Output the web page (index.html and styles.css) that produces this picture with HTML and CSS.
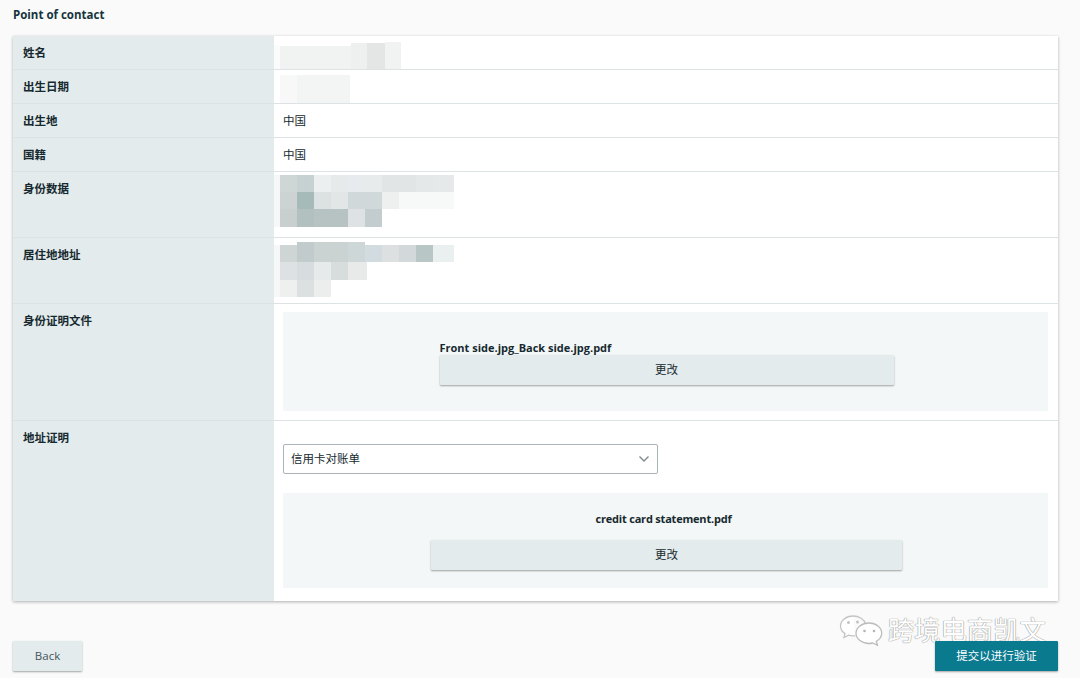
FILE: index.html

```html
<!DOCTYPE html>
<html lang="zh-CN">
<head>
  <meta charset="UTF-8">
  <title>Point of contact</title>
  <link rel="stylesheet" href="styles.css">
</head>
<body>
  <h1 class="page-title">Point of contact</h1>

  <div class="card">
    <div class="row row-short">
      <div class="label">姓名</div>
      <div class="value">
        <svg class="mosaic" width="140" height="33" viewBox="0 0 140 33">
          <rect x="-12" y="9" width="18" height="24" fill="#fafbfb"/>
          <rect x="6" y="10" width="71" height="23" fill="#f1f2f2"/>
          <rect x="77" y="7" width="16" height="26" fill="#eeefef"/>
          <rect x="93" y="7" width="18" height="26" fill="#e4e6e6"/>
          <rect x="111" y="6" width="16" height="27" fill="#f1f2f2"/>
        </svg>
      </div>
    </div>
    <div class="row row-short">
      <div class="label">出生日期</div>
      <div class="value">
        <svg class="mosaic" width="140" height="33" viewBox="0 0 140 33">
          <rect x="6" y="5" width="17" height="28" fill="#f8f8f8"/>
          <rect x="23" y="5" width="53" height="28" fill="#f3f4f4"/>
        </svg>
      </div>
    </div>
    <div class="row row-short">
      <div class="label">出生地</div>
      <div class="value">中国</div>
    </div>
    <div class="row row-short">
      <div class="label">国籍</div>
      <div class="value">中国</div>
    </div>
    <div class="row row-tall">
      <div class="label">身份数据</div>
      <div class="value">
        <svg class="mosaic" width="190" height="60" viewBox="0 0 190 60">
          <g transform="translate(6 3)">
            <rect x="-6" y="0" width="6" height="52" fill="#f6f8f8"/>
            <rect x="0" y="0" width="17" height="17" fill="#ced6d6"/>
            <rect x="17" y="0" width="17" height="17" fill="#c6d2d2"/>
            <rect x="34" y="0" width="17" height="17" fill="#eceff0"/>
            <rect x="51" y="0" width="17" height="17" fill="#e6eaea"/>
            <rect x="68" y="0" width="17" height="17" fill="#e8ebee"/>
            <rect x="85" y="0" width="17" height="17" fill="#e8ebeb"/>
            <rect x="102" y="0" width="34" height="17" fill="#e2e5e5"/>
            <rect x="136" y="0" width="17" height="17" fill="#e5e8e8"/>
            <rect x="153" y="0" width="21" height="17" fill="#e6e9e9"/>
            <rect x="0" y="17" width="17" height="17" fill="#cdd2d2"/>
            <rect x="17" y="17" width="17" height="17" fill="#a7baba"/>
            <rect x="34" y="17" width="17" height="17" fill="#dce1e2"/>
            <rect x="51" y="17" width="17" height="17" fill="#e2e6e6"/>
            <rect x="68" y="17" width="34" height="17" fill="#d0d8da"/>
            <rect x="102" y="17" width="17" height="17" fill="#eef0f0"/>
            <rect x="119" y="17" width="55" height="17" fill="#f7f8f8"/>
            <rect x="0" y="34" width="17" height="18" fill="#c9cfcf"/>
            <rect x="17" y="34" width="17" height="18" fill="#b2c0c0"/>
            <rect x="34" y="34" width="34" height="18" fill="#b7c3c3"/>
            <rect x="68" y="34" width="17" height="18" fill="#dfe2e4"/>
            <rect x="85" y="34" width="17" height="18" fill="#c3cdcf"/>
          </g>
        </svg>
      </div>
    </div>
    <div class="row row-tall">
      <div class="label">居住地地址</div>
      <div class="value">
        <svg class="mosaic" width="190" height="60" viewBox="0 0 190 60">
          <g transform="translate(6 7)">
            <rect x="-6" y="0" width="6" height="52" fill="#f6f8f8"/>
            <rect x="0" y="0" width="17" height="17" fill="#cfd4d4"/>
            <rect x="17" y="-3" width="17" height="20" fill="#c2cbcb"/>
            <rect x="34" y="-3" width="34" height="20" fill="#cbd2d2"/>
            <rect x="68" y="-3" width="17" height="20" fill="#cdd7d7"/>
            <rect x="85" y="0" width="17" height="17" fill="#d2dbe0"/>
            <rect x="102" y="0" width="17" height="17" fill="#dde0e0"/>
            <rect x="119" y="0" width="17" height="17" fill="#d3d8da"/>
            <rect x="136" y="0" width="17" height="17" fill="#b8c6c6"/>
            <rect x="153" y="0" width="21" height="17" fill="#eaf0ef"/>
            <rect x="0" y="17" width="17" height="18" fill="#dde1e3"/>
            <rect x="17" y="17" width="17" height="18" fill="#d7dcde"/>
            <rect x="34" y="17" width="17" height="18" fill="#e7eaea"/>
            <rect x="51" y="17" width="17" height="18" fill="#d6dddc"/>
            <rect x="68" y="17" width="19" height="18" fill="#e8eaea"/>
            <rect x="0" y="35" width="17" height="17" fill="#eef0f0"/>
            <rect x="17" y="35" width="17" height="17" fill="#dde0e0"/>
            <rect x="34" y="35" width="17" height="17" fill="#eceeee"/>
          </g>
        </svg>
      </div>
    </div>
    <div class="row row-idfile">
      <div class="label">身份证明文件</div>
      <div class="value">
        <div class="upload upload-id">
          <div class="upload-inner">
            <div class="file-name">Front side.jpg_Back side.jpg.pdf</div>
            <button class="btn btn-change">更改</button>
          </div>
        </div>
      </div>
    </div>
    <div class="row row-address">
      <div class="label">地址证明</div>
      <div class="value">
        <div class="select">
          <span>信用卡对账单</span>
          <svg width="12" height="8" viewBox="0 0 12 8"><path d="M1.5 1.5 6 6l4.5-4.5" fill="none" stroke="#7d8a8e" stroke-width="1.4"/></svg>
        </div>
        <div class="upload upload-address">
          <div class="file-name">credit card statement.pdf</div>
          <button class="btn btn-change btn-wide">更改</button>
        </div>
      </div>
    </div>
  </div>

  <div class="footer">
    <button class="btn btn-back">Back</button>
    <div class="watermark">
      <svg width="44" height="32" viewBox="0 0 44 32">
        <path d="M14 2C7 2 1.500 6.500 1.500 12c0 3.200 1.800 5.800 4.500 7.600L5 23.500l4.500-2.300c1.500.4 3 .6 4.500.6 1 0 1.500 0 2.300-.2" fill="#fff" stroke="#c4c4c4" stroke-width="1.300"/>
        <path d="M14 2c6 0 11.500 3.400 12.700 8.300" fill="none" stroke="#c4c4c4" stroke-width="1.300"/>
        <path d="M30 9c-7 0-13 4.600-13 10.300S23 29.500 30 29.500c1.300 0 2.600-.2 3.800-.5l4.700 2.300-1.200-4c3.500-1.900 5.400-4.700 5.400-8 0-5.700-5.700-10.300-12.700-10.300z" fill="#fff" stroke="#bcbcbc" stroke-width="1.300"/>
        <circle cx="9.500" cy="8.500" r="1.500" fill="#c4c4c4"/>
        <circle cx="18.500" cy="8" r="1.500" fill="#c4c4c4"/>
        <circle cx="25.500" cy="17" r="1.300" fill="#b4b4b4"/>
        <circle cx="35" cy="17" r="1.300" fill="#b4b4b4"/>
      </svg>
      <span>跨境电商凯文</span>
    </div>
    <button class="btn btn-submit">提交以进行验证</button>
  </div>
</body>
</html>
```

FILE: styles.css

```css
html, body {
  height: 100%;
}
body {
  font-family: 'Open Sans', 'Noto Sans CJK SC', sans-serif;
  font-size: 11.5px;
  margin: 0;
  padding: 0 22px 7px 13px;
  box-sizing: border-box;
  background-color: #fafafa;
  color: #16292f;
  overflow: hidden;
}
.page-title {
  font-size: 11.5px;
  font-weight: 700;
  line-height: 16px;
  margin: 0;
  padding: 7px 0 13px;
  color: #16343c;
}
.card {
  background: #fff;
  box-shadow: 0 1px 3px rgba(0, 0, 0, 0.3);
}
.row {
  display: grid;
  grid-template-columns: 261px 1fr;
  border-bottom: 1px solid #dde3e4;
  box-sizing: border-box;
}
.row:last-child {
  border-bottom: none;
}
.row-short {
  height: 34px;
}
.row-tall {
  height: 66px;
}
.row-idfile {
  height: 117px;
}
.row-address {
  height: 180px;
}
.label {
  background: #e3ebec;
  font-weight: 700;
  line-height: 16px;
  padding: 9px 10px 8px;
}
.value {
  line-height: 16px;
  padding: 9px 10px 8px 9px;
  position: relative;
}
.row-idfile .value, .row-address .value {
  padding-top: 8px;
}
.mosaic {
  position: absolute;
  left: 0;
  top: 0;
}
.upload {
  background: #f4f7f7;
  display: flex;
  flex-direction: column;
  align-items: center;
}
.upload-id {
  height: 99px;
  justify-content: center;
  padding-top: 2px;
  box-sizing: border-box;
}
.upload-inner {
  width: 454px;
  margin-left: 2px;
}
.upload-address {
  height: 95px;
  padding-top: 19px;
  box-sizing: border-box;
}
.upload-address .file-name {
  letter-spacing: -0.2px;
  padding-right: 4px;
}
.file-name {
  font-weight: 700;
  font-size: 11px;
  line-height: 14px;
}
.btn {
  font-family: 'Open Sans', 'Noto Sans CJK SC', sans-serif;
  font-size: 11.5px;
  line-height: 14px;
  height: 30px;
  border: none;
  border-radius: 1px;
  color: #16292f;
  background: #e3ebec;
  box-shadow: 0 1px 2px rgba(0, 0, 0, 0.35);
  padding: 0;
}
.btn-change {
  display: block;
  width: 454px;
}
.btn-wide {
  width: 471px;
  margin: 14px 0 0 2px;
}
.select {
  display: flex;
  align-items: center;
  justify-content: space-between;
  width: 375px;
  height: 30px;
  box-sizing: border-box;
  margin: 15px 0 19px;
  padding: 0 7px;
  background: #fff;
  border: 1px solid #aab3b5;
  border-radius: 2px;
}
.footer {
  display: flex;
  justify-content: space-between;
  margin-top: 40px;
  position: relative;
}
.btn-back {
  width: 69px;
  color: #44565b;
}
.btn-submit {
  width: 123px;
  color: #fff;
  background: #0a7a8f;
  position: relative;
}
.watermark {
  position: absolute;
  right: 12px;
  top: -27px;
  display: flex;
  align-items: center;
  gap: 5px;
  font-size: 26.4px;
  line-height: 30px;
  color: #fff;
  text-shadow: 0 0 1px #8a8a8a, 0 0 1px #8a8a8a;
}
.watermark span {
  white-space: nowrap;
}
```
